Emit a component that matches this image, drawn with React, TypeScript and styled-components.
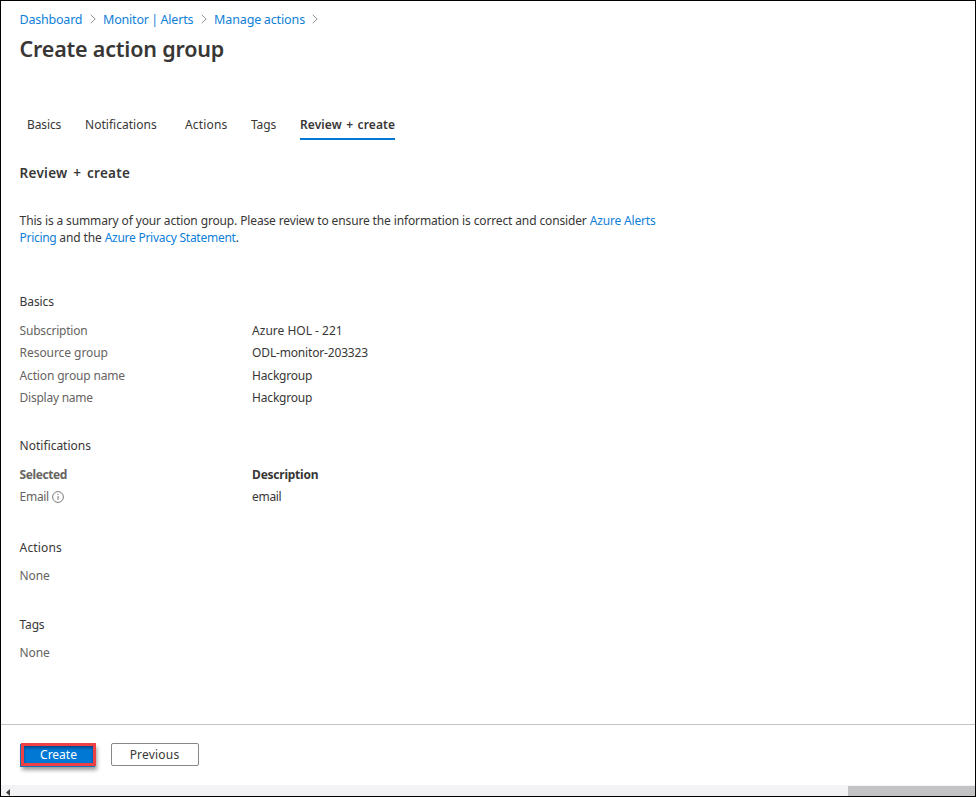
import React from 'react';
import styled, { createGlobalStyle } from 'styled-components';

const GlobalStyle = createGlobalStyle`
  * { box-sizing: border-box; }
  body { margin: 0; background: #fff; overflow: hidden; }
  h1, h2, h3, p { margin: 0; }
`;

const Blade = styled.div`
  display: flex;
  flex-direction: column;
  width: 976px;
  height: 797px;
  border: 1px solid #000;
  background: #fff;
  color: #383736;
  font: 400 12px/17px "Noto Sans", "Open Sans", sans-serif;
`;

const Content = styled.main`
  flex: 1;
  display: flex;
  flex-direction: column;
  padding: 9px 18.6px 0;
`;

const Text = styled.span<{ $track?: number }>`
  letter-spacing: ${(p) => p.$track ?? 0}px;
  white-space: nowrap;
`;

const Breadcrumb = styled.nav`
  display: flex;
  align-items: center;
  height: 18px;
  font-size: 12.5px;
`;

const Crumb = styled.a<{ $track: number; $width: number }>`
  width: ${(p) => p.$width}px;
  color: #0f80d8;
  letter-spacing: ${(p) => p.$track}px;
  word-spacing: -0.6px;
  white-space: nowrap;
`;

const Chevron = styled.svg`
  width: 6px;
  height: 10px;
  margin: 0 7px;
  fill: none;
  stroke: #979593;
`;

const Title = styled.h1`
  margin-top: 5px;
  font-size: 21.5px;
  font-weight: 600;
  line-height: 32px;
  letter-spacing: -0.2px;
`;

const TabList = styled.div`
  display: flex;
  height: 26px;
  margin: 49px 0 0 7.4px;
`;

const Tab = styled.div<{ $track: number; $width: number; $active?: boolean }>`
  width: ${(p) => p.$width}px;
  height: 26px;
  padding-top: 2px;
  border-bottom: ${(p) => (p.$active ? '2px solid #0078d4' : 'none')};
  font-weight: ${(p) => (p.$active ? 600 : 400)};
  letter-spacing: ${(p) => p.$track}px;
  word-spacing: ${(p) => (p.$active ? 1.2 : 0)}px;
  white-space: nowrap;
`;

const Heading = styled.h2`
  margin-top: 23px;
  font-size: 13.5px;
  font-weight: 600;
  line-height: 20px;
  letter-spacing: 0.26px;
  word-spacing: 2px;
`;

const Summary = styled.p`
  display: flex;
  flex-direction: column;
  margin-top: 29px;
  white-space: nowrap;
`;

const Link = styled.a<{ $track: number }>`
  color: #0f80d8;
  letter-spacing: ${(p) => p.$track}px;
`;

const Section = styled.section<{ $gap: number }>`
  margin-top: ${(p) => p.$gap}px;
`;

const SectionTitle = styled.h3<{ $track: number }>`
  margin-bottom: 9px;
  font-size: 12px;
  font-weight: 400;
  line-height: 17px;
  letter-spacing: ${(p) => p.$track}px;
`;

const Row = styled.div<{ $bold?: boolean }>`
  display: grid;
  grid-template-columns: 232.5px 1fr;
  align-items: center;
  height: 22.5px;
  font-weight: ${(p) => (p.$bold ? 700 : 400)};
`;

const Label = styled.div<{ $track: number }>`
  display: flex;
  align-items: center;
  gap: 3px;
  color: #666462;
  letter-spacing: ${(p) => p.$track}px;
`;

const InfoIcon = styled.svg`
  width: 12px;
  height: 12px;
  fill: none;
  stroke: #7c7a78;
`;

const Footer = styled.footer`
  display: flex;
  gap: 14.5px;
  height: 61px;
  padding: 18px 19px 0 20px;
  border-top: 1px solid #c4c3c2;
`;

const Button = styled.button`
  width: 88px;
  height: 23px;
  padding: 0;
  border: 1px solid #8a8886;
  border-radius: 2px;
  background: #fff;
  color: #383736;
  font: inherit;
  line-height: 16px;
  letter-spacing: 0.2px;
`;

const PrimaryButton = styled(Button)`
  width: 75px;
  border: 3px solid #ef4043;
  border-radius: 0;
  background: #0078d4;
  box-shadow:
    inset 0 2px 3px rgba(0, 40, 90, 0.6),
    -1px 1px 0 #1673b8,
    1px 4px 4px rgba(0, 0, 0, 0.4);
  color: #fff;
  letter-spacing: 0;
`;

const ScrollTrack = styled.div`
  display: flex;
  align-items: flex-end;
  justify-content: space-between;
  height: 11px;
  background: #f3f2f4;
`;

const ScrollArrow = styled.svg`
  width: 4px;
  height: 7px;
  margin-left: 5px;
  fill: #3c3c3c;
`;

const ScrollThumb = styled.div`
  width: 127px;
  height: 10px;
  background: #c3c2c4;
`;

const crumbs = [
  { label: 'Dashboard', width: 63.4, track: -0.22 },
  { label: 'Monitor | Alerts', width: 91, track: -0.18 },
  { label: 'Manage actions', width: 91, track: -0.1 },
];

const tabs = [
  { label: 'Basics', width: 58, track: -0.1 },
  { label: 'Notifications', width: 100, track: 0.03 },
  { label: 'Actions', width: 66, track: 0.18 },
  { label: 'Tags', width: 49, track: -0.1 },
  { label: 'Review + create', width: 95, track: 0.1, active: true },
];

const basics = [
  { label: 'Subscription', lt: -0.21, value: 'Azure HOL - 221', vt: 0 },
  { label: 'Resource group', lt: -0.06, value: 'ODL-monitor-203323', vt: -0.17 },
  { label: 'Action group name', lt: -0.16, value: 'Hackgroup', vt: -0.2 },
  { label: 'Display name', lt: -0.25, value: 'Hackgroup', vt: -0.2 },
];

export default function App() {
  return (
    <>
      <GlobalStyle />
      <Blade>
        <Content>
          <Breadcrumb>
            {crumbs.map((c) => (
              <React.Fragment key={c.label}>
                <Crumb $track={c.track} $width={c.width}>{c.label}</Crumb>
                <Chevron viewBox="0 0 6 10"><path d="M.7.8 5.2 5 .7 9.2" /></Chevron>
              </React.Fragment>
            ))}
          </Breadcrumb>
          <Title>Create action group</Title>
          <TabList>
            {tabs.map((t) => (
              <Tab key={t.label} $track={t.track} $width={t.width} $active={t.active}>{t.label}</Tab>
            ))}
          </TabList>
          <Heading>Review + create</Heading>
          <Summary>
            <span>
              <Text $track={-0.135}>
                This is a summary of your action group. Please review to ensure the information is correct and consider{' '}
              </Text>
              <Link $track={-0.17}>Azure Alerts</Link>
            </span>
            <span>
              <Link $track={-0.32}>Pricing</Link>
              <Text $track={-0.12}> and the </Text>
              <Link $track={-0.26}>Azure Privacy Statement</Link>.
            </span>
          </Summary>

          <Section $gap={47}>
            <SectionTitle $track={-0.1}>Basics</SectionTitle>
            {basics.map((b) => (
              <Row key={b.label}>
                <Label $track={b.lt}>{b.label}</Label>
                <Text $track={b.vt}>{b.value}</Text>
              </Row>
            ))}
          </Section>

          <Section $gap={28}>
            <SectionTitle $track={0}>Notifications</SectionTitle>
            <Row $bold>
              <Label $track={-0.42}>Selected</Label>
              <Text $track={-0.24}>Description</Text>
            </Row>
            <Row>
              <Label $track={-0.3}>
                Email
                <InfoIcon viewBox="0 0 12 12">
                  <circle cx="6" cy="6" r="5.4" />
                  <path d="M6 5v4M6 3v1" />
                </InfoIcon>
              </Label>
              <Text $track={-0.35}>email</Text>
            </Row>
          </Section>

          <Section $gap={30.5}>
            <SectionTitle $track={0.15}>Actions</SectionTitle>
            <Row><Label $track={-0.1}>None</Label></Row>
          </Section>

          <Section $gap={28.5}>
            <SectionTitle $track={-0.2}>Tags</SectionTitle>
            <Row><Label $track={-0.1}>None</Label></Row>
          </Section>
        </Content>
        <Footer>
          <PrimaryButton>Create</PrimaryButton>
          <Button>Previous</Button>
        </Footer>
        <ScrollTrack>
          <ScrollArrow viewBox="0 0 4 7"><path d="M4 0v7L0 3.5z" /></ScrollArrow>
          <ScrollThumb />
        </ScrollTrack>
      </Blade>
    </>
  );
}
